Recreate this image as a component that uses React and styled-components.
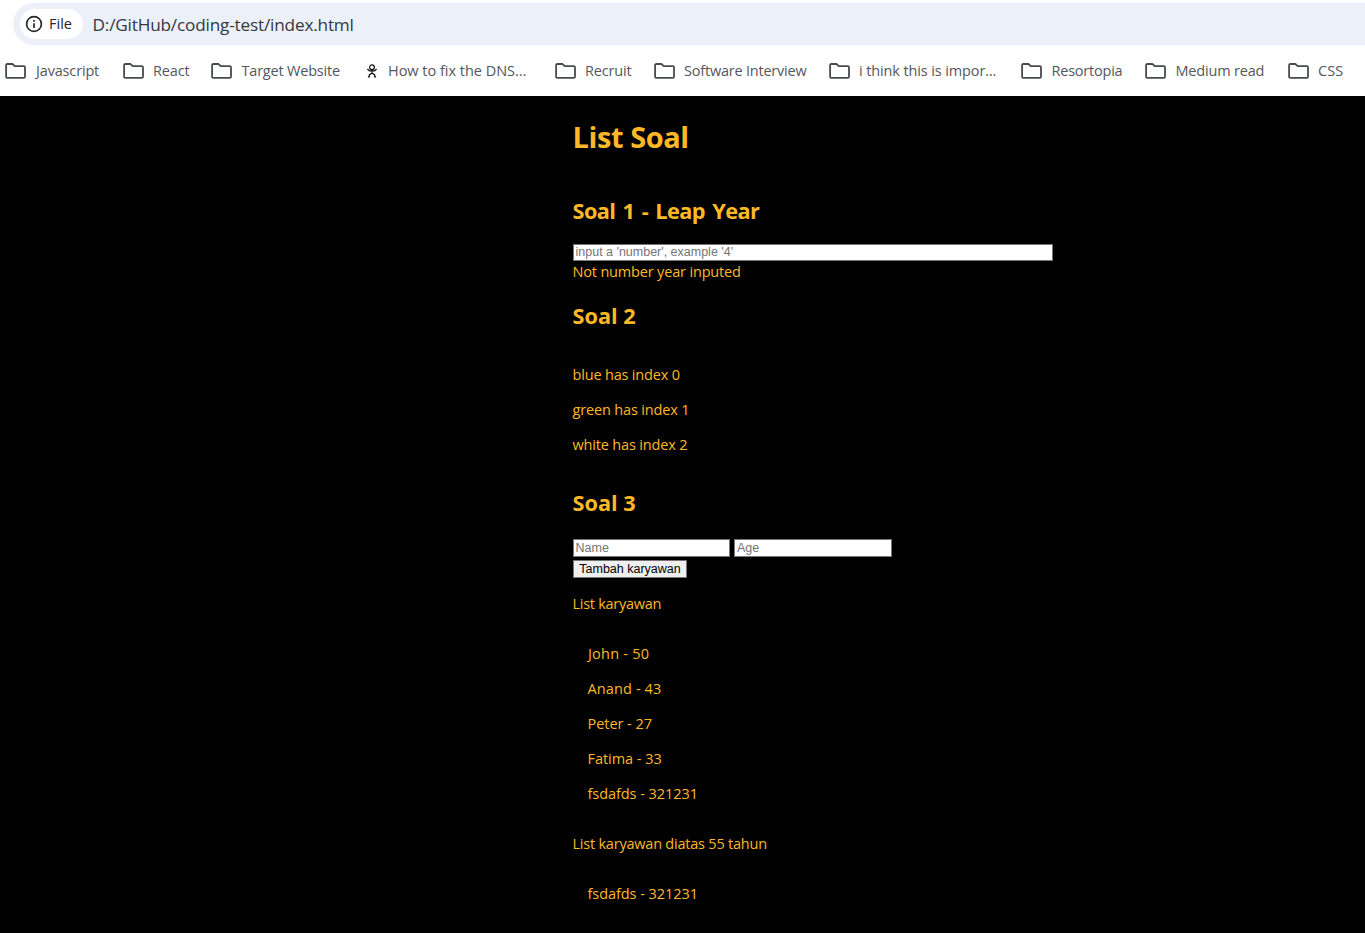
import React from "react";
import styled, { createGlobalStyle } from "styled-components";

const GlobalStyle = createGlobalStyle`
  * { box-sizing: border-box; }
  html, body { margin: 0; height: 100%; background: #000; overflow: hidden; }
  body { font-family: "Open Sans", "Noto Sans", sans-serif; }
`;

const Chrome = styled.header`
  height: 96px;
  padding-top: 3px;
  background: #fff;
  overflow: hidden;
`;

const AddressBar = styled.div`
  display: flex;
  align-items: center;
  height: 42px;
  margin-left: 13px;
  padding-left: 7px;
  border-radius: 21px 0 0 21px;
  background: #ebf0f9;
`;

const FileChip = styled.div`
  display: flex;
  align-items: center;
  gap: 6px;
  width: 63px;
  height: 30px;
  padding-left: 5px;
  border-radius: 15px;
  background: #fff;
  color: #24272b;
  font-size: 14.5px;
  font-weight: 500;
  line-height: 20px;
  white-space: nowrap;
`;

const Url = styled.span`
  margin-left: 9.5px;
  padding-top: 2px;
  color: #34383e;
  font-size: 17.2px;
  line-height: 24px;
  letter-spacing: -0.18px;
  white-space: nowrap;
`;

const Bookmarks = styled.nav`
  display: flex;
  height: 51px;
  padding-left: 5px;
  overflow: hidden;
`;

const Bookmark = styled.div`
  display: flex;
  flex: none;
  align-items: center;
  width: ${(p) => p.$width}px;
  color: #54575b;
  font-size: 14.5px;
  line-height: 20px;
  letter-spacing: ${(p) => p.$spacing}px;
  white-space: nowrap;
`;

const BookmarkIcon = styled.span`
  display: flex;
  flex: none;
  width: ${(p) => p.$width}px;
  padding-left: ${(p) => p.$inset || 0}px;
`;

const Page = styled.main`
  width: 480px;
  margin-left: 572.5px;
  padding-top: 21px;
  color: #fdb827;
  font-size: 14.5px;
  line-height: 20px;
`;

const Title = styled.h1`
  margin: 0 0 39px;
  font-size: 29px;
  line-height: 40px;
  letter-spacing: -0.42px;
`;

const Heading = styled.h2`
  margin: 0 0 ${(p) => p.$after}px;
  font-size: 21.75px;
  line-height: 30px;
  letter-spacing: ${(p) => p.$spacing || 0}px;
  word-spacing: ${(p) => p.$wordGap || 0}px;
`;

const Line = styled.p`
  margin: 0 0 ${(p) => p.$after ?? 15}px;
  padding-left: ${(p) => p.$indent || 0}px;
  letter-spacing: ${(p) => p.$spacing || 0}px;
`;

const Field = styled.input`
  display: block;
  width: ${(p) => p.$width}px;
  height: ${(p) => p.$height}px;
  padding: 0 2px ${(p) => p.$lift ?? 1}px;
  border: 1px solid #767676;
  border-radius: 0;
  outline: none;
  background: #fff;
  font: 12.5px "Liberation Sans", Arial, sans-serif;
  &::placeholder { color: #757575; }
`;

const YearResult = styled(Line)`
  padding-top: 1px;
`;

const FieldRow = styled.div`
  display: flex;
  gap: 4px;
  margin-bottom: 3px;
`;

const AddButton = styled.button`
  display: block;
  width: 114px;
  height: 18px;
  margin: 0 0 16px;
  padding: 0 0 0 1px;
  border: 1px solid #767676;
  border-radius: 0;
  background: #efefef;
  color: #000;
  font: 12.5px/16px "Liberation Sans", Arial, sans-serif;
  white-space: nowrap;
`;

const ColorList = styled.div`
  padding-bottom: 18px;
`;

const List = styled.div`
  padding: 15px 0 15px 15px;
`;

const FolderIcon = () => (
  <svg width="22" height="18" viewBox="0 0 22 18" fill="none" stroke="#484b4f" strokeWidth="1.8" strokeLinejoin="round">
    <path d="M2.2 2h5.2l2.4 2.2h9.1c.7 0 1.1.4 1.1 1.1v9.4c0 .7-.4 1.1-1.1 1.1H2.2c-.7 0-1.1-.4-1.1-1.1V3.1c0-.7.4-1.1 1.1-1.1z" />
  </svg>
);

const FigureIcon = () => (
  <svg width="16" height="16" viewBox="0 0 16 16" fill="none" stroke="#111" strokeWidth="1.2">
    <circle cx="8" cy="4.3" r="2.4" />
    <path d="M3.4 6l2 1.8h5.2l2-1.8M8 6.5v3.7M3.9 13.9h1.4v-2L8 10l2.7 1.9v2h1.4" />
  </svg>
);

const InfoIcon = () => (
  <svg width="18" height="18" viewBox="0 0 18 18" fill="none" stroke="#24272b" strokeWidth="1.7">
    <circle cx="9" cy="9" r="7.4" />
    <path d="M9 8.2v4.7M9 5v1.8" />
  </svg>
);

const bookmarks = [
  { label: "Javascript", width: 118, spacing: -0.16, lead: 31 },
  { label: "React", width: 88, spacing: -0.15 },
  { label: "Target Website", width: 148, spacing: -0.2, lead: 30.5 },
  { label: "How to fix the DNS...", width: 196, spacing: -0.02, lead: 29, figure: true },
  { label: "Recruit", width: 99, spacing: -0.15 },
  { label: "Software Interview", width: 175, spacing: -0.21 },
  { label: "i think this is impor...", width: 192, spacing: -0.12 },
  { label: "Resortopia", width: 124, spacing: -0.22, lead: 30.5 },
  { label: "Medium read", width: 143, spacing: -0.18, lead: 30.5 },
  { label: "CSS", width: 60, spacing: 0.1 },
];

const colors = [
  { text: "blue has index 0", spacing: -0.18 },
  { text: "green has index 1", spacing: -0.16 },
  { text: "white has index 2", spacing: -0.17 },
];

const employees = [
  { text: "John - 50", spacing: 0.22, indent: 0.5 },
  { text: "Anand - 43", spacing: 0.13 },
  { text: "Peter - 27", spacing: -0.05 },
  { text: "Fatima - 33", spacing: -0.04 },
  { text: "fsdafds - 321231", spacing: -0.06 },
];

const overAge = [{ text: "fsdafds - 321231", spacing: -0.06 }];

const Lines = ({ items }) =>
  items.map((item) => (
    <Line key={item.text} $spacing={item.spacing} $indent={item.indent}>
      {item.text}
    </Line>
  ));

export default function App() {
  return (
    <>
      <GlobalStyle />
      <Chrome>
        <AddressBar>
          <FileChip>
            <InfoIcon />
            File
          </FileChip>
          <Url>D:/GitHub/coding-test/index.html</Url>
        </AddressBar>
        <Bookmarks>
          {bookmarks.map((b) => (
            <Bookmark key={b.label} $width={b.width} $spacing={b.spacing}>
              <BookmarkIcon $width={b.lead || 30} $inset={b.figure ? 4.5 : 0}>
                {b.figure ? <FigureIcon /> : <FolderIcon />}
              </BookmarkIcon>
              {b.label}
            </Bookmark>
          ))}
        </Bookmarks>
      </Chrome>
      <Page>
        <Title>List Soal</Title>
        <Heading $after={18} $spacing={-0.6} $wordGap={2.2}>Soal 1 - Leap Year</Heading>
        <Field $width={480} $height={17} $lift={2} placeholder="input a 'number', example '4'" />
        <YearResult $after={19} $spacing={-0.17}>Not number year inputed</YearResult>
        <Heading $after={34}>Soal 2</Heading>
        <ColorList>
          <Lines items={colors} />
        </ColorList>
        <Heading $after={21}>Soal 3</Heading>
        <FieldRow>
          <Field $width={157.5} $height={18} placeholder="Name" />
          <Field $width={158} $height={18} placeholder="Age" />
        </FieldRow>
        <AddButton type="button">Tambah karyawan</AddButton>
        <Line $spacing={-0.28}>List karyawan</Line>
        <List>
          <Lines items={employees} />
        </List>
        <Line $spacing={-0.22}>List karyawan diatas 55 tahun</Line>
        <List>
          <Lines items={overAge} />
        </List>
      </Page>
    </>
  );
}
